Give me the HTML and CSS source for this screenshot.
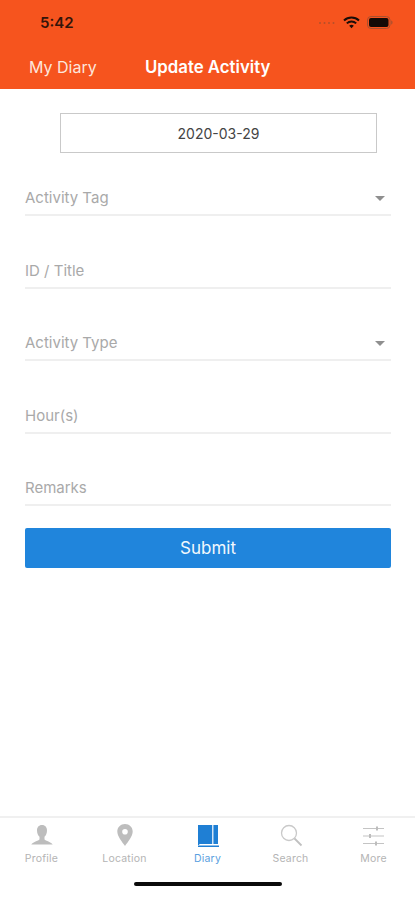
FILE: index.html
```html
<!DOCTYPE html>
<html lang="en">
<head>
<meta charset="utf-8">
<title>Update Activity</title>
<link rel="stylesheet" href="styles.css">
</head>
<body>
<div class="app">
  <header class="header">
    <div class="status">
      <span class="time">5:42</span>
      <div class="status-icons">
        <svg class="signal" width="18" height="4" viewBox="0 0 18 4"><g fill="#b5502a"><circle cx="2" cy="2" r="1"/><circle cx="6.5" cy="2" r="1"/><circle cx="11" cy="2" r="1"/><circle cx="15.500" cy="2" r="1"/></g></svg>
        <svg width="17" height="13" viewBox="0 0 17 13"><g fill="none" stroke="#1a0d08" stroke-width="2"><path d="M1 4.500a10.800 10.800 0 0 1 15 0"/><path d="M3.800 7.400a6.800 6.800 0 0 1 9.400 0"/></g><path d="M6.200 9.800a3.400 3.400 0 0 1 4.600 0L8.500 12.300z" fill="#1a0d08"/></svg>
        <svg width="26" height="13" viewBox="0 0 26 13"><rect x=".5" y=".5" width="22.500" height="12" rx="3.500" fill="none" stroke="#a8502f"/><rect x="2" y="2" width="19.500" height="9" rx="2" fill="#120a06"/><path d="M24.200 4.500c1 .4 1.300 1.100 1.300 2s-.3 1.600-1.300 2z" fill="#a8502f"/></svg>
      </div>
    </div>
    <nav class="nav">
      <span class="back">My Diary</span>
      <span class="title">Update Activity</span>
    </nav>
  </header>

  <main class="form">
    <div class="date-box">2020-03-29</div>
    <div class="field field-first"><span>Activity Tag</span><i class="caret"></i></div>
    <div class="field"><span>ID / Title</span></div>
    <div class="field"><span>Activity Type</span><i class="caret"></i></div>
    <div class="field"><span>Hour(s)</span></div>
    <div class="field"><span>Remarks</span></div>
    <button class="submit" type="button">Submit</button>
  </main>

  <footer class="tabbar">
    <div class="tabs">
      <div class="tab">
        <svg width="26" height="26" viewBox="0 0 26 26"><path d="M13 1c3.300 0 5 2.400 5 5.500 0 2.700-1.100 5-2.500 6.300v2.400c0 1.300 6.500 2.300 8.200 5.300H2.300c1.700-3 8.200-4 8.200-5.300v-2.400C9.100 11.500 8 9.200 8 6.500 8 3.400 9.700 1 13 1z" fill="#bdbdbd"/></svg>
        <span>Profile</span>
      </div>
      <div class="tab">
        <svg width="26" height="26" viewBox="0 0 26 26"><path fill-rule="evenodd" d="M13 0c4.400 0 7.700 3.300 7.700 7.600 0 4.800-4.700 10.400-7.700 14.400-3-4-7.700-9.600-7.700-14.400C5.300 3.300 8.600 0 13 0zm0 5a2.800 2.800 0 1 0 0 5.600A2.800 2.800 0 0 0 13 5z" fill="#bdbdbd"/></svg>
        <span>Location</span>
      </div>
      <div class="tab tab-active">
        <svg width="26" height="26" viewBox="0 0 26 26"><path d="M3 1h20v19H5.500C4.500 20 4 20.500 4 21h-1z" fill="#1f7fd4"/><rect x="17" y="1" width="1.500" height="19" fill="#cfe3f6"/><rect x="3" y="21.500" width="21" height="1.500" fill="#1f7fd4"/></svg>
        <span>Diary</span>
      </div>
      <div class="tab">
        <svg width="26" height="26" viewBox="0 0 26 26"><circle cx="11" cy="9" r="7.500" fill="none" stroke="#c9c9c9" stroke-width="1.300"/><path d="M16.500 14.500l7 7" stroke="#c0c0c0" stroke-width="1.800" fill="none"/></svg>
        <span>Search</span>
      </div>
      <div class="tab">
        <svg width="26" height="26" viewBox="0 0 26 26"><g stroke="#c4c4c4" stroke-width="1.200" fill="none"><path d="M2 4.500h21M2 12h21M2 19.500h21"/></g><g fill="#bdbdbd"><rect x="15" y="2.500" width="2" height="4"/><rect x="8" y="10" width="2" height="4"/><rect x="14" y="17.500" width="2" height="4"/></g></svg>
        <span>More</span>
      </div>
    </div>
    <div class="home-indicator"></div>
  </footer>
</div>
</body>
</html>
```

FILE: styles.css
```css
* { box-sizing: border-box; }
html, body { margin: 0; padding: 0; background: #fff; }
body { font-family: Inter, "Liberation Sans", sans-serif; }

.app {
  width: 415px;
  height: 900px;
  display: flex;
  flex-direction: column;
  overflow: hidden;
}

.header {
  height: 89px;
  flex: none;
  background: #f6541e;
  display: flex;
  flex-direction: column;
}
.status {
  height: 45px;
  padding: 0 22px 0 40px;
  display: flex;
  align-items: center;
  justify-content: space-between;
}
.time { font-size: 15px; font-weight: 600; color: #33140a; }
.status-icons { display: flex; align-items: center; gap: 7px; }

.nav {
  height: 44px;
  padding: 0 0 1px 29px;
  display: flex;
  align-items: center;
  color: #fff;
}
.back { width: 116px; font-size: 16px; font-weight: 400; color: #fde6dc; }
.title { font-size: 16.800px; font-weight: 600; }

.form {
  flex: 1;
  padding: 24px 24px 0 25px;
  display: flex;
  flex-direction: column;
}
.date-box {
  align-self: flex-start;
  margin-left: 35px;
  width: 317px;
  height: 40px;
  border: 1.500px solid #c9c9c9;
  display: flex;
  align-items: center;
  justify-content: center;
  font-size: 14px;
  color: #444;
}
.field {
  height: 72.500px;
  border-bottom: 2px solid #efefef;
  display: flex;
  align-items: flex-end;
  justify-content: space-between;
  padding-bottom: 7px;
  font-size: 15px;
  color: #a9a9a9;
}
.field-first { height: 63px; padding-bottom: 7px; }
.caret {
  width: 0;
  height: 0;
  border-left: 5.500px solid transparent;
  border-right: 5.500px solid transparent;
  border-top: 5.500px solid #8f8f8f;
  margin: 0 6px 6px 0;
}
.submit {
  margin-top: 22px;
  height: 40px;
  border: 0;
  border-radius: 2px;
  background: #2085dc;
  color: #f2f8fd;
  font-family: inherit;
  font-size: 17px;
  font-weight: 400;
}

.tabbar {
  flex: none;
  height: 84px;
  border-top: 2px solid #f0f0f0;
  display: flex;
  flex-direction: column;
}
.tabs { display: flex; padding-top: 6px; }
.tab {
  flex: 1;
  display: flex;
  flex-direction: column;
  align-items: center;
  font-size: 10.500px;
  color: #b4b4b4;
}
.tab svg { display: block; margin-bottom: 1px; }
.tab span { margin-top: 1px; letter-spacing: .2px; }
.tab-active { color: #5b9fe0; }
.home-indicator {
  width: 148px;
  height: 4px;
  border-radius: 2px;
  background: #0a0a0a;
  margin: 17px auto 0;
}
```
